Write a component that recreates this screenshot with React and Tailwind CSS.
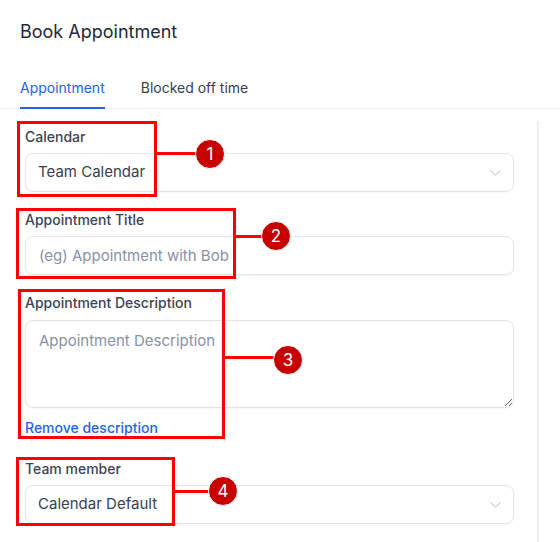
import { useState } from 'react';

const font = { fontFamily: 'Inter, "Noto Sans", sans-serif' };

function Chevron() {
  return (
    <svg width="11" height="6" viewBox="0 0 11 6" fill="none" className="absolute right-[12px] top-1/2 -translate-y-1/2">
      <path d="M0.5 0.5L5.5 5L10.5 0.5" stroke="#b4b9c4" strokeWidth="1" />
    </svg>
  );
}

function Marker({ n, x, y }) {
  return (
    <div
      className="absolute flex h-[30px] w-[30px] -translate-x-1/2 -translate-y-1/2 items-center justify-center rounded-full border border-white bg-[#c70000] text-[17px] leading-none text-white"
      style={{ left: x, top: y }}
    >
      {n}
    </div>
  );
}

function Field({ label, className = '', children }) {
  return (
    <div className={`flex flex-col gap-[6px] ${className}`}>
      <label className="text-[14px] font-medium leading-[20px] text-[#3b4354]">{label}</label>
      {children}
    </div>
  );
}

const boxCls =
  'rounded-[8px] border border-[#e2e4e9] text-[15px] text-[#374151] shadow-[0_1px_2px_rgba(16,24,40,0.04)]';

export default function App() {
  const [tab, setTab] = useState('appointment');

  return (
    <div className="relative h-[542px] w-[560px] overflow-hidden bg-white" style={font}>
      <div className="flex h-[64px] items-center px-[20px]">
        <h1 className="text-[18px] leading-[24px] text-[#1f2937]">Book Appointment</h1>
      </div>

      <div className="flex h-[45px] items-end gap-[36px] border-b border-[#eceef2] px-[20px]">
        <button
          onClick={() => setTab('appointment')}
          className={`-mb-px border-b-2 pb-[9px] text-[14px] leading-[20px] ${tab === 'appointment' ? 'border-[#2563eb] text-[#2563eb]' : 'border-transparent text-[#374151]'}`}
        >
          Appointment
        </button>
        <button
          onClick={() => setTab('blocked')}
          className={`-mb-px border-b-2 pb-[9px] text-[14px] leading-[20px] ${tab === 'blocked' ? 'border-[#2563eb] text-[#2563eb]' : 'border-transparent text-[#374151]'}`}
        >
          Blocked off time
        </button>
      </div>

      <div className="mt-[12px] flex">
        <div className="flex w-[539px] flex-col border-r-2 border-[#eceef2] pb-[40px] pl-[25px] pr-[23px] pt-[6px]">
          <Field label="Calendar">
            <div className={`relative flex h-[39px] items-center px-[12px] ${boxCls}`}>
              Team Calendar
              <Chevron />
            </div>
          </Field>

          <Field label="Appointment Title" className="mt-[18px]">
            <input
              placeholder="(eg) Appointment with Bob"
              className={`block h-[39px] w-full px-[13px] outline-none placeholder:text-[#8991a3] ${boxCls}`}
            />
          </Field>

          <Field label="Appointment Description" className="mt-[18px]">
            <textarea
              placeholder="Appointment Description"
              className={`mt-[1px] block h-[88px] w-full px-[13px] pt-[9px] leading-[22px] outline-none placeholder:text-[#8991a3] ${boxCls}`}
            />
          </Field>
          <button className="mt-[10px] self-start text-[14px] font-medium leading-[20px] text-[#1d63ed]">Remove description</button>

          <Field label="Team member" className="mt-[21px]">
            <div className={`relative flex h-[39px] items-center px-[12px] ${boxCls}`}>
              Calendar Default
              <Chevron />
            </div>
          </Field>
        </div>
      </div>

      {/* annotation overlay */}
      <div className="pointer-events-none absolute inset-0">
        <div className="absolute left-[17px] top-[121px] h-[76px] w-[140px] border-[3px] border-[#ff0000]" />
        <div className="absolute left-[157px] top-[152px] h-[3px] w-[45px] bg-[#ff0000]" />
        <Marker n="1" x={210} y={154} />

        <div className="absolute left-[16px] top-[208px] h-[71px] w-[220px] border-[3px] border-[#ff0000]" />
        <div className="absolute left-[236px] top-[235px] h-[3px] w-[30px] bg-[#ff0000]" />
        <Marker n="2" x={276} y={236} />

        <div className="absolute left-[18px] top-[289px] h-[150px] w-[207px] border-[3px] border-[#ff0000]" />
        <div className="absolute left-[225px] top-[356px] h-[3px] w-[55px] bg-[#ff0000]" />
        <Marker n="3" x={288} y={360} />

        <div className="absolute left-[16px] top-[457px] h-[69px] w-[159px] border-[3px] border-[#ff0000]" />
        <div className="absolute left-[175px] top-[490px] h-[3px] w-[40px] bg-[#ff0000]" />
        <Marker n="4" x={223} y={491} />
      </div>
    </div>
  );
}
